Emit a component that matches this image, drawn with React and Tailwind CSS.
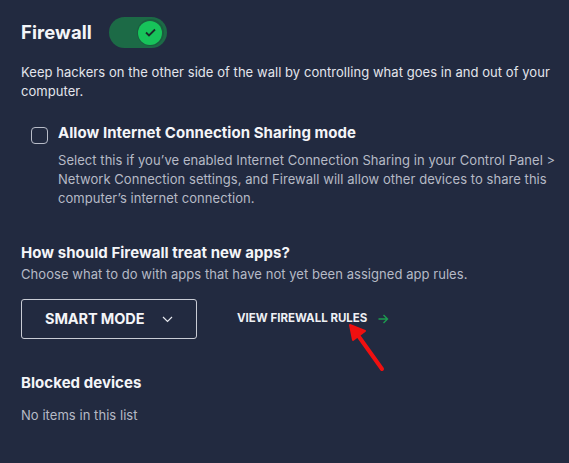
const font = { fontFamily: 'Inter, "Noto Sans", sans-serif' }

export default function App() {
  return (
    <div className="relative min-h-[463px] w-[569px] bg-[#222a40] px-[21px] pt-[17px] text-white" style={font}>
      <div className="flex items-center gap-[17px]">
        <h1 className="text-[18.5px] font-bold tracking-[0.1px] text-[#f4f5f8]">Firewall</h1>
        <Toggle />
      </div>

      <p className="mt-[15px] whitespace-nowrap text-[13px] leading-[19px] tracking-[0.05px] text-[#e2e5ec]">
        Keep hackers on the other side of the wall by controlling what goes in and out of your
        <br />
        computer.
      </p>

      <div className="mt-[22px] flex gap-[10px] pl-[10px]">
        <div className="mt-[4px] h-[17px] w-[17px] shrink-0 rounded-[4px] border border-[#b8bcc8]" />
        <div>
          <p className="text-[15px] font-bold leading-[20px] tracking-[0.05px] text-[#f4f5f8]">Allow Internet Connection Sharing mode</p>
          <p className="mt-[8px] whitespace-nowrap text-[13px] leading-[19px] tracking-[0.05px] text-[#b6bac6]">
            Select this if you’ve enabled Internet Connection Sharing in your Control Panel &gt;
            <br />
            Network Connection settings, and Firewall will allow other devices to share this
            <br />
            computer’s internet connection.
          </p>
        </div>
      </div>

      <h2 className="mt-[35px] text-[15px] font-bold leading-[20px] tracking-[0.05px] text-[#f4f5f8]">How should Firewall treat new apps?</h2>
      <p className="mt-[2px] text-[13px] leading-[19px] tracking-[0.05px] text-[#b6bac6]">Choose what to do with apps that have not yet been assigned app rules.</p>

      <div className="mt-[15px] flex items-center">
        <button type="button" className="flex h-[40px] w-[176px] items-center rounded-[3px] border border-[#c9ccd5] pl-[23px] text-[14.5px] font-bold tracking-[-0.1px] text-[#f4f5f8]">
          SMART MODE
          <svg className="ml-[18px]" width="11" height="7" viewBox="0 0 11 7" fill="none">
            <path d="M1 1l4.5 4.5L10 1" stroke="#e6e8ee" strokeWidth="1.2" />
          </svg>
        </button>
        <a className="ml-[40px] flex items-center text-[11.5px] font-bold tracking-[0px] text-[#eef0f4]">
          VIEW FIREWALL RULES
          <svg className="ml-[11px]" width="11" height="10" viewBox="0 0 11 10" fill="none">
            <path d="M0.5 5h9M5.5 1l4 4-4 4" stroke="#1c9b4f" strokeWidth="1.4" />
          </svg>
        </a>
      </div>

      <h2 className="mt-[34px] text-[15px] font-bold leading-[20px] tracking-[0.05px] text-[#f4f5f8]">Blocked devices</h2>
      <p className="mt-[13px] text-[13px] leading-[19px] tracking-[0.05px] text-[#b6bac6]">No items in this list</p>

      <svg className="absolute left-[344px] top-[320px]" width="45" height="54" viewBox="0 0 45 54" fill="none">
        <path d="M38 49L13 14" stroke="#f01010" strokeWidth="4" strokeLinecap="round" />
        <path d="M6 5L21 11L9 20Z" fill="#f01010" stroke="#f01010" strokeWidth="2" strokeLinejoin="round" />
      </svg>
    </div>
  )
}

function Toggle() {
  return (
    <div className="flex h-[31px] w-[58px] items-center justify-end rounded-full bg-[#1c6a46] pr-[3px]">
      <div className="flex h-[27px] w-[27px] items-center justify-center rounded-full bg-[#1a5e3f]">
        <div className="flex h-[24px] w-[24px] items-center justify-center rounded-full bg-[#17c35a]">
          <svg width="11" height="9" viewBox="0 0 11 9" fill="none">
            <path d="M1 4.5l3 3L10 1.5" stroke="#1a2a2a" strokeWidth="1.8" />
          </svg>
        </div>
      </div>
    </div>
  )
}
